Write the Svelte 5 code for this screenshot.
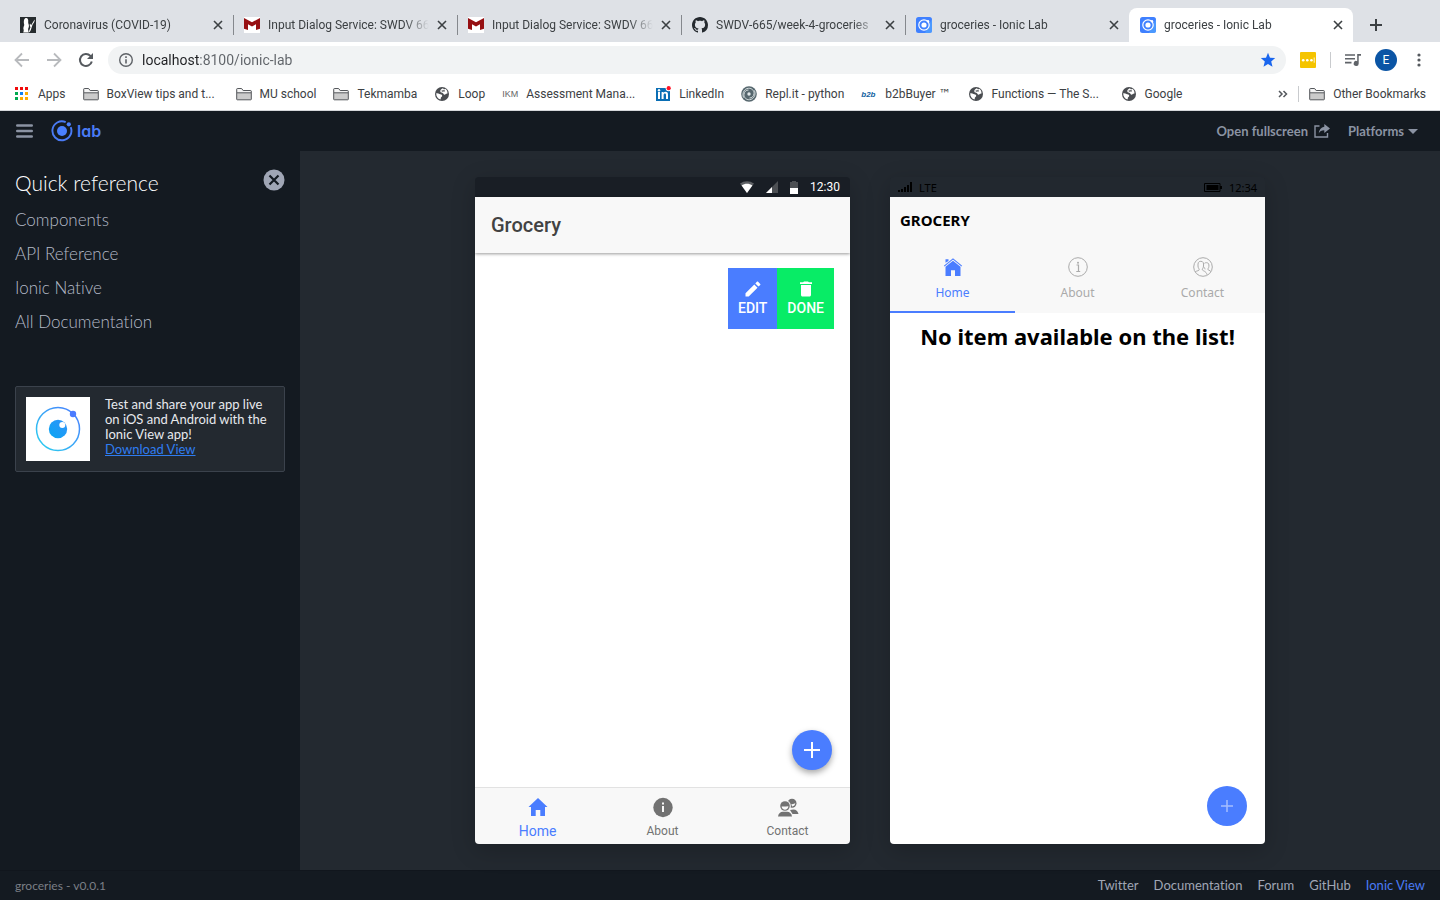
<script>
  const tabs = [
    { icon: 'rabbit', title: 'Coronavirus (COVID-19)' },
    { icon: 'mcafee', title: 'Input Dialog Service: SWDV 66' },
    { icon: 'mcafee', title: 'Input Dialog Service: SWDV 66' },
    { icon: 'github', title: 'SWDV-665/week-4-groceries' },
    { icon: 'ionic', title: 'groceries - Ionic Lab' },
    { icon: 'ionic', title: 'groceries - Ionic Lab', active: true }
  ];

  const bookmarks = [
    { icon: 'apps', label: 'Apps' },
    { icon: 'folder', label: 'BoxView tips and t...', long: true },
    { icon: 'folder', label: 'MU school' },
    { icon: 'folder', label: 'Tekmamba' },
    { icon: 'globe', label: 'Loop' },
    { icon: 'ikm', label: 'Assessment Mana...', long: true },
    { icon: 'linkedin', label: 'LinkedIn' },
    { icon: 'replit', label: 'Repl.it - python' },
    { icon: 'b2b', label: 'b2bBuyer', trademark: true },
    { icon: 'globe', label: 'Functions — The S...', long: true },
    { icon: 'globe', label: 'Google' }
  ];

  const reference = ['Components', 'API Reference', 'Ionic Native', 'All Documentation'];
  const footerLinks = ['Twitter', 'Documentation', 'Forum', 'GitHub'];
  const appTabs = ['Home', 'About', 'Contact'];

  let url = $state('localhost:8100/ionic-lab');
</script>

{#snippet icon(name)}
  <svg class="icon" viewBox="0 0 16 16" aria-hidden="true">
    {#if name === 'rabbit'}
      <rect width="16" height="16" fill="#262b2e" />
      <path d="M5.600 1C7.600.4 8.600 2.600 8.200 5c-.2 1.200.6 2 .7 3.600.1 2-.6 2.400-.8 3.600L8.600 15.500H3.200c.6-1.200.6-1.700.4-2.900C2.900 11 3.900 9.200 4.300 7.900 3.500 5.200 3.700 1.700 5.600 1z" fill="#fff" />
      <path d="M14.600 2.500c.5 1.700-.8 3.500-2 5l-1.800 5.500c-.5 1.400-1.500 2.300-2.300 2.400l2-5.200C9.400 8.500 9.700 6.500 10.300 6.700l.8 1.500z" fill="#fff" />
    {:else if name === 'mcafee'}
      <rect width="16" height="16" fill="#fff" />
      <path d="M0 1l8 4.200L16 1v10.800l-4 1.200V7.200L8 9.400 4 7.200V13l-4-1.200z" fill="#960f12" />
    {:else if name === 'github'}
      <path fill="#24292e" d="M8 0C3.58 0 0 3.58 0 8c0 3.54 2.29 6.53 5.47 7.59.4.07.55-.17.55-.38 0-.19-.01-.82-.01-1.49-2.01.37-2.53-.49-2.69-.94-.09-.23-.48-.94-.82-1.13-.28-.15-.68-.52-.01-.53.63-.01 1.08.58 1.23.82.72 1.21 1.87.87 2.33.66.07-.52.28-.87.51-1.07-1.78-.2-3.64-.89-3.64-3.95 0-.87.31-1.59.82-2.15-.08-.2-.36-1.02.08-2.12 0 0 .67-.21 2.2.82.64-.18 1.32-.27 2-.27.68 0 1.36.09 2 .27 1.53-1.04 2.2-.82 2.2-.82.44 1.1.16 1.92.08 2.12.51.56.82 1.27.82 2.15 0 3.07-1.87 3.75-3.65 3.95.29.25.54.73.54 1.48 0 1.07-.01 1.93-.01 2.2 0 .21.15.46.55.38A8.013 8.013 0 0016 8c0-4.42-3.58-8-8-8z" />
    {:else if name === 'ionic'}
      <rect width="16" height="16" rx="2.500" fill="#3f80ff" />
      <path d="M16 2v11.500a2.500 2.500 0 0 1-2.500 2.500H9z" fill="#51a4ff" opacity=".7" />
      <circle cx="8" cy="8" r="5.200" fill="none" stroke="#fff" stroke-width="1.200" />
      <circle cx="8" cy="8" r="2.600" fill="#fff" />
      <circle cx="12" cy="4.300" r="1.200" fill="#fff" />
    {:else if name === 'apps'}
      <g transform="translate(0 1)">
        <path d="M1 0h3v3H1zM6 0h3v3H6zM11 0h3v3h-3z" fill="#f00b0b" />
        <path d="M1 5h3v3H1zM1 10h3v3H1z" fill="#00a94f" />
        <path d="M6 5h3v3H6z" fill="#0f80f5" />
        <path d="M11 5h3v3h-3zM6 10h3v3H6zM11 10h3v3h-3z" fill="#ffab00" />
      </g>
    {:else if name === 'folder'}
      <path d="M.7 13.300V3.200c0-.4.3-.7.700-.7h4.200l1.600 2h7.400c.4 0 .7.300.7.700v8.100c0 .3-.2.500-.5.500H1.200c-.3 0-.5-.2-.5-.5z" fill="#cbcbcb" />
      <path d="M1.200 3h4.200L7 5h7.700v1.700H1.200z" fill="#f4f4f4" />
      <path d="M.7 13.300V3.200c0-.4.3-.7.700-.7h4.200l1.600 2h7.400c.4 0 .7.300.7.700v8.100c0 .3-.2.500-.5.500H1.200c-.3 0-.5-.2-.5-.5zM1 6.800h14" fill="none" stroke="#55585c" />
    {:else if name === 'globe'}
      <circle cx="8" cy="8" r="7" fill="#4a4d51" />
      <path d="M9 2.200C7.600 2.600 5.900 4 6.300 5.600c.3 1.300 1.900 1.100 2.700 1.600.7.500.6 1.500 1.600 1.500 1.100 0 1.200-1.200 2.900-1.100.2-2.400-.9-4-2.300-4.800-.6.800-1.300.9-2.200-.6z" fill="#fff" />
      <path d="M2.200 7.300c1.300-.4 2.400.2 3.300.7 1.100.5 2.400.3 2.700 1.400.3 1.200-1.100 1.300-1.300 2.200-.1.700 0 1.300-.4 2C3.800 12.900 2.100 10.500 2.200 7.300z" fill="#fff" />
      <path d="M7.700 5.300c1.200-.9 1.800 0 3-.7" fill="none" stroke="#4a4d51" stroke-width="1.300" />
    {:else if name === 'linkedin'}
      <path d="M1 2h14v13H1z" fill="#0a6eb4" />
      <rect x="3" y="6" width="2" height="7" fill="#fff" />
      <circle cx="4" cy="4.200" r="1.200" fill="#fff" />
      <path d="M6.600 6h1.900v1c.5-.8 1.200-1.200 2.200-1.200 1.700 0 2.300 1.100 2.300 2.900V13h-2V9c0-.9-.3-1.500-1.100-1.500-.9 0-1.300.7-1.300 1.600V13h-2z" fill="#fff" />
      <circle cx="13.700" cy="2.200" r="3" fill="#fff" />
      <circle cx="13.700" cy="2.200" r="2.100" fill="#ff1226" />
    {:else if name === 'replit'}
      <circle cx="8" cy="8" r="7.800" fill="#56676e" />
      <g fill="none" stroke="#dfe6e8" stroke-width=".9">
        <path d="M2.500 11.500C.8 7 3.300 2.600 7.500 2.300c3.500-.2 5.800 2.400 5.500 5.400-.2 2.700-2.200 4.300-4.500 4.300" />
        <path d="M13.500 4.500c1.700 4.500-.8 8.900-5 9.200-3.500.2-5.800-2.400-5.500-5.400.2-2.700 2.200-4.300 4.500-4.300" />
      </g>
      <circle cx="8" cy="8" r="1.700" fill="#dfe6e8" />
    {/if}
  </svg>
{/snippet}

{#snippet closeX()}
  <svg width="10" height="10" viewBox="0 0 10 10" aria-hidden="true"><path d="M1 1l8 8M9 1l-8 8" stroke="#3c4043" stroke-width="1.600" fill="none" /></svg>
{/snippet}

<div class="window">
  <header class="browser">
    <div class="tabstrip">
      {#each tabs as tab}
        <div class="tab" class:active={tab.active}>
          {@render icon(tab.icon)}
          <span class="title">{tab.title}</span>
          <button class="bare" aria-label="Close tab">{@render closeX()}</button>
        </div>
      {/each}
      <button class="bare newtab" aria-label="New tab">
        <svg width="12" height="12" viewBox="0 0 12 12"><path d="M6 0v12M0 6h12" stroke="#3c4043" stroke-width="2" /></svg>
      </button>
    </div>

    <div class="toolbar">
      <div class="history">
        <button class="bare" aria-label="Back">
          <svg width="16" height="16" viewBox="0 0 16 16"><path d="M15 8H2M8 1.500L1.500 8 8 14.500" fill="none" stroke="#b8babd" stroke-width="1.800" /></svg>
        </button>
        <button class="bare" aria-label="Forward">
          <svg width="16" height="16" viewBox="0 0 16 16"><path d="M1 8h13M8 1.500L14.500 8 8 14.500" fill="none" stroke="#b8babd" stroke-width="1.800" /></svg>
        </button>
        <button class="bare" aria-label="Reload">
          <svg width="16" height="16" viewBox="0 0 16 16"><path d="M13.800 9.500A6 6 0 1 1 12.400 3.900L14 5.500" fill="none" stroke="#55595e" stroke-width="2" /><path d="M15 1v6H9z" fill="#55595e" /></svg>
        </button>
      </div>
      <div class="omnibox">
        <svg width="16" height="16" viewBox="0 0 16 16" aria-hidden="true"><circle cx="8" cy="8" r="6.300" fill="none" stroke="#5f6368" stroke-width="1.400" /><path d="M8 7.200v4.300M8 4.300v1.600" stroke="#5f6368" stroke-width="1.600" /></svg>
        <input aria-label="Address" bind:value={url} />
        <svg width="16" height="16" viewBox="0 0 16 16" aria-hidden="true"><path d="M8 .8l2 4.900 5.200.4-4 3.400 1.300 5.200L8 11.900l-4.500 2.800 1.300-5.200-4-3.400L6 5.700z" fill="#1a66ee" /></svg>
      </div>
      <div class="extensions">
        <svg width="16" height="16" viewBox="0 0 16 16" aria-hidden="true"><rect width="16" height="16" rx="1" fill="#f5c400" /><circle cx="3.200" cy="8.300" r="1.300" fill="#fff" /><circle cx="7.300" cy="8.300" r="1.300" fill="#fff" /><circle cx="11.400" cy="8.300" r="1.300" fill="#fff" /><path d="M14.200 5.500v5.200" stroke="#fff" stroke-width=".8" /></svg>
        <span class="rule"></span>
        <svg width="16" height="16" viewBox="0 0 16 16" aria-hidden="true"><path d="M0 3h10M0 6.800h10M0 10.600h6.500" stroke="#5f6368" stroke-width="1.600" /><path d="M16 2v1.800h-2.300v7.700a2.500 2.500 0 1 1-1.500-2.300V2z" fill="#5f6368" /></svg>
        <button class="avatar">E</button>
        <button class="bare" aria-label="Menu">
          <svg width="16" height="16" viewBox="0 0 16 16"><g fill="#55595e"><circle cx="8" cy="3" r="1.600" /><circle cx="8" cy="8" r="1.600" /><circle cx="8" cy="13" r="1.600" /></g></svg>
        </button>
      </div>
    </div>

    <nav class="bookmarks" aria-label="Bookmarks">
      {#each bookmarks as mark}
        <a class="mark" class:long={mark.long} href="#top">
          {#if mark.icon === 'ikm'}
            <span class="ikm">IKM</span>
          {:else if mark.icon === 'b2b'}
            <span class="b2b">b2b</span>
          {:else}
            {@render icon(mark.icon)}
          {/if}
          <span>{mark.label}{#if mark.trademark}{' '}<span class="tm">™</span>{/if}</span>
        </a>
      {/each}
      <div class="overflow">
        <button class="bare" aria-label="More bookmarks">
          <svg width="10" height="8" viewBox="0 0 10 8"><path d="M1 1l3 3-3 3M5.500 1l3 3-3 3" fill="none" stroke="#55595e" stroke-width="1.500" /></svg>
        </button>
        <span class="rule"></span>
        <a class="mark" href="#top">{@render icon('folder')}<span>Other Bookmarks</span></a>
      </div>
    </nav>
  </header>

  <div class="labbar">
    <button class="bare" aria-label="Toggle menu">
      <svg width="17" height="14" viewBox="0 0 17 14"><path d="M1.200 1.500h14.600M1.200 7h14.600M1.200 12.500h14.600" stroke="#8b93a3" stroke-width="2.400" stroke-linecap="round" /></svg>
    </button>
    <a class="logo" href="#top">
      <svg width="22" height="22" viewBox="0 0 22 22" aria-hidden="true">
        <path d="M14.700 2.100A9.500 9.500 0 1 0 19.700 7.200" fill="none" stroke="#4a7bf5" stroke-width="1.900" />
        <circle cx="11" cy="11" r="5" fill="#4a80ff" />
        <circle cx="17.800" cy="4.300" r="2.100" fill="#4a80ff" />
      </svg>
      <span>lab</span>
    </a>
    <div class="actions">
      <a href="#top">Open fullscreen
        <svg width="16" height="14" viewBox="0 0 16 14" aria-hidden="true"><path d="M5.500 2H1v11h12.500V9" fill="none" stroke="#8b93a3" stroke-width="1.400" /><path d="M10.300 0L16 4.500 10.300 9V6.300C7.500 6.300 5.800 7.300 4.700 9.500 5 5.800 7 3.300 10.300 2.800z" fill="#8b93a3" /></svg>
      </a>
      <button class="bare platforms">Platforms
        <svg width="10" height="5" viewBox="0 0 10 5" aria-hidden="true"><path d="M0 0h10L5 5z" fill="#8b93a3" /></svg>
      </button>
    </div>
  </div>

  <div class="body">
    <aside>
      <div class="heading">
        <h2>Quick reference</h2>
        <button class="bare" aria-label="Close quick reference">
          <svg width="22" height="22" viewBox="0 0 22 22"><circle cx="11" cy="11" r="10.500" fill="#a0a6b5" /><path d="M6.500 6.500l9 9M15.500 6.500l-9 9" stroke="#141a21" stroke-width="2.200" /></svg>
        </button>
      </div>
      <ul>
        {#each reference as item}
          <li><a href="#top">{item}</a></li>
        {/each}
      </ul>
      <section class="promo">
        <svg width="64" height="64" viewBox="0 0 64 64" aria-hidden="true">
          <defs>
            <linearGradient id="ring" x1="1" y1="0" x2="0" y2="1"><stop offset="0" stop-color="#4a7bff" /><stop offset="1" stop-color="#2ad3ee" /></linearGradient>
            <linearGradient id="eye" x1="1" y1="0" x2="0" y2="1"><stop offset="0" stop-color="#2f93fa" /><stop offset="1" stop-color="#0aa5f2" /></linearGradient>
          </defs>
          <rect width="64" height="64" fill="#fff" />
          <circle cx="32" cy="32" r="21.500" fill="none" stroke="url(#ring)" stroke-width="1.500" />
          <circle cx="47" cy="17" r="3.200" fill="#4a7bff" />
          <circle cx="32" cy="32" r="9.200" fill="url(#eye)" />
          <circle cx="36.300" cy="28" r="3" fill="#fff" />
        </svg>
        <p>Test and share your app live on iOS and Android with the Ionic View app!<br /><a href="#top">Download View</a></p>
      </section>
    </aside>

    <main>
      <article class="phone md">
        <div class="status">
          <svg width="14" height="12" viewBox="0 0 14 12" aria-hidden="true"><path d="M0 2.600C4-.7 10-.7 14 2.600L7 12z" fill="#5d6064" /><path d="M1.600 4.400c3.200-2.300 7.600-2.300 10.800 0L7 12z" fill="#fff" /></svg>
          <svg width="12" height="12" viewBox="0 0 12 12" aria-hidden="true"><path d="M0 12L12 0v12z" fill="#4d5054" /><path d="M0 12l6-6v6z" fill="#fff" /></svg>
          <svg width="8" height="13" viewBox="0 0 8 13" aria-hidden="true"><path d="M0 1h2V0h4v1h2v6H0z" fill="#4d5054" /><path d="M0 7h8v6H0z" fill="#fff" /></svg>
          <span>12:30</span>
        </div>
        <header><h1>Grocery</h1></header>
        <div class="content">
          <div class="options">
            <button class="edit">
              <svg width="16" height="16" viewBox="0 0 16 16" aria-hidden="true"><path d="M.5 12.300v3.200h3.200l8.800-8.800-3.200-3.200zM15.200 4.100c.4-.4.4-.9 0-1.200L13.100.8c-.4-.4-.9-.4-1.200 0l-1.600 1.600 3.200 3.200z" fill="#fff" /></svg>
              EDIT
            </button>
            <button class="done">
              <svg width="16" height="16" viewBox="0 0 16 16" aria-hidden="true"><path d="M3 4h10v10c0 .9-.7 1.500-1.500 1.500h-7C3.700 15.500 3 14.900 3 14zM14 1.300V3H2V1.300h3.100L6 .5h4l.9.8z" fill="#fff" /></svg>
              DONE
            </button>
          </div>
          <button class="fab" aria-label="Add item"><svg width="16" height="16" viewBox="0 0 16 16"><path d="M8 0v16M0 8h16" stroke="#fff" stroke-width="2" /></svg></button>
        </div>
        <nav>
          {#each appTabs as name, i}
            <a href="#top" class:on={i === 0}>
              <svg width="24" height="24" viewBox="0 0 24 24" aria-hidden="true">
                {#if name === 'Home'}
                  <path d="M9.700 21v-6h4.600v6h4.700v-9h2.500L12 3l-9.500 9H5v9z" fill="currentColor" />
                {:else if name === 'About'}
                  <circle cx="12" cy="12.500" r="9.700" fill="currentColor" /><path d="M11 11h2v6h-2zM11 7.500h2v2h-2z" fill="#f8f8f8" />
                {:else}
                  <g fill="currentColor"><circle cx="16" cy="8.300" r="4.500" /><path d="M14 15c5-1.500 7.500 0 8.500 4h-6z" /></g>
                  <circle cx="9" cy="11" r="5.900" fill="#f8f8f8" />
                  <g fill="currentColor"><circle cx="9" cy="11" r="4.800" /><path d="M2 21.500c.5-3.300 2.500-4.500 4.800-4.700h4.400c2.300.2 4.300 1.400 4.800 4.700z" /></g>
                  <path d="M5.600 11.500c2.400.2 4.400-.2 6.800-.200-.2 4.400-6.400 4.500-6.800.200zM15.200 9.200c2.200.1 3-.200 4.100-1.100-.2 2-1.200 3.200-3.100 3.400z" fill="#f8f8f8" />
                {/if}
              </svg>
              <span>{name}</span>
            </a>
          {/each}
        </nav>
      </article>

      <article class="phone wp">
        <div class="status">
          <svg width="14" height="10" viewBox="0 0 14 10" aria-hidden="true"><path d="M0 8h2v2H0zM3 7h2v3H3zM6 5h2v5H6zM9 3h2v7H9zM12 0h2v10h-2z" /></svg>
          <span>LTE</span>
          <svg class="battery" width="18" height="9" viewBox="0 0 18 9" aria-hidden="true"><path d="M.5.500h15.500v8H.5z" fill="none" stroke="#000" /><path d="M2.500 2h12v5h-12zM16 3h2v3h-2z" /></svg>
          <span>12:34</span>
        </div>
        <header><h1>GROCERY</h1></header>
        <nav>
          {#each appTabs as name, i}
            <a href="#top" class:on={i === 0}>
              <svg width="20" height="20" viewBox="0 0 20 20" aria-hidden="true">
                {#if name === 'Home'}
                  <path d="M2.500 19V9.700l7.500-6 7.500 6V19H12v-5.700H8V19zM2.500 5.800V2.300h3v1.600z" fill="currentColor" /><path d="M1.200 9.100L10 1.900l8.800 7.200" fill="none" stroke="currentColor" stroke-width="1.100" />
                {:else if name === 'About'}
                  <circle cx="10" cy="10" r="9.300" fill="none" stroke="currentColor" /><path d="M8.500 8h2v6.500M8.300 14.500h3.900" fill="none" stroke="currentColor" stroke-width="1.200" /><circle cx="10" cy="5.700" r="1" fill="currentColor" />
                {:else}
                  <g fill="none" stroke="currentColor"><circle cx="10" cy="10" r="9.300" /><path d="M2.200 14.800c1.800-1.200 4-.9 4-2.200 0-1-1.200-1.500-1.200-3.600C4.800 6 5.300 4.300 7.800 4.300s3 1.700 2.700 4.700c0 2-1.200 2.600-1.200 3.600 0 1.400 4 1.200 4.700 5.200M11.500 6.300c.6-.5 1.300-.7 2.100-.6 2 0 2.500 1.600 2.300 3.700 0 1.500-1 2-1 2.900 0 .9 1.900.9 3 2.200M11.200 10.300c.2 1 .9 1.300.9 2" /></g>
                {/if}
              </svg>
              <span>{name}</span>
            </a>
          {/each}
        </nav>
        <div class="content">
          <h2>No item available on the list!</h2>
          <button class="fab" aria-label="Add item"><svg width="12" height="12" viewBox="0 0 12 12"><path d="M6 0v12M0 6h12" stroke="#a5beff" stroke-width="1.500" /></svg></button>
        </div>
      </article>
    </main>
  </div>

  <footer>
    <span>groceries - v0.0.1</span>
    <nav aria-label="Links">
      {#each footerLinks as link}<a href="#top">{link}</a>{/each}
      <a class="view" href="#top">Ionic View</a>
    </nav>
  </footer>
</div>

<style>
  :global(body) { margin: 0; }
  * { box-sizing: border-box; }
  a { color: inherit; text-decoration: none; }
  h1, h2, p, ul { margin: 0; padding: 0; }
  ul { list-style: none; }
  svg { display: block; flex: none; }
  button { font: inherit; color: inherit; border: 0; padding: 0; cursor: pointer; }
  .bare { background: none; display: flex; align-items: center; flex: none; }
  .icon { width: 16px; height: 16px; }
  .rule { width: 1px; height: 16px; background: #c9cbce; flex: none; }

  .window { min-height: 100vh; display: flex; flex-direction: column; background: #141a21; font-family: Lato, sans-serif; font-variant-ligatures: none; }

  .browser { background: #fff; border-bottom: 1px solid #d5d7da; font-family: Roboto, sans-serif; font-size: 12px; color: #3c4043; }
  .tabstrip { display: flex; height: 42px; padding: 8px 0 0 9px; background: #dee1e6; }
  .tab { flex: 0 1 224px; min-width: 0; display: flex; align-items: center; gap: 8px; padding: 0 10px 0 11px; position: relative; }
  .tab + .tab::before { content: ''; position: absolute; left: 0; top: 7px; width: 1px; height: 20px; background: #85888d; }
  .tab .title { flex: 1; min-width: 0; overflow: hidden; white-space: nowrap; mask-image: linear-gradient(to right, #000 calc(100% - 24px), transparent); }
  .tab.active { background: #fff; border-radius: 8px 8px 0 0; }
  .tab.active::before { display: none; }
  .newtab { padding: 0 17px; }

  .toolbar { display: flex; align-items: center; gap: 14px; height: 36px; padding: 0 13px 0 14px; }
  .history { display: flex; gap: 16px; }
  .omnibox { flex: 1; display: flex; align-items: center; gap: 8px; height: 28px; padding: 0 10px; border-radius: 14px; background: #f1f3f4; }
  .omnibox input { flex: 1; min-width: 0; border: 0; padding: 0; outline: 0; font: 14px Roboto, sans-serif; color: transparent; background: linear-gradient(to right, #202124 57px, #5f6368 57px); -webkit-background-clip: text; background-clip: text; }
  .extensions { display: flex; align-items: center; gap: 14px; }
  .avatar { width: 22px; height: 22px; border-radius: 50%; background: #0b55a5; color: #fff; }

  .bookmarks { display: flex; align-items: center; gap: 17px; height: 32px; padding: 0 14px; white-space: nowrap; }
  .mark { display: flex; align-items: center; gap: 8px; }
  .long { min-width: 136px; }
  .overflow { display: flex; align-items: center; gap: 10px; margin-left: auto; }
  .ikm { width: 16px; font: 9px "Liberation Sans", sans-serif; color: #666; }
  .b2b { width: 16px; font: italic 700 8px "Liberation Sans", sans-serif; color: #12639f; }
  .tm { font-family: "DejaVu Sans", sans-serif; line-height: 1; }

  .labbar { display: flex; align-items: center; height: 40px; padding: 0 22px 0 16px; color: #8b93a3; }
  .logo { display: flex; align-items: center; gap: 4px; margin-left: 18px; color: #4a7bf5; font: 600 16px Inter, sans-serif; font-feature-settings: "cv11"; }
  .actions { display: flex; align-items: center; gap: 18px; margin-left: auto; font-size: 13px; font-weight: 700; }
  .actions a { display: flex; align-items: center; gap: 6px; }
  .platforms { gap: 4px; }

  .body { flex: 1; display: flex; }
  aside { width: 300px; flex: none; padding: 16px 15px; color: #b4bac8; }
  .heading { display: flex; justify-content: space-between; align-items: flex-start; }
  .heading h2 { font-size: 21px; font-weight: 300; line-height: 32px; color: #fff; }
  .heading .bare { height: 26px; }
  ul { margin-top: 4px; font-size: 17px; font-weight: 300; line-height: 34px; }
  .promo { display: flex; gap: 15px; margin-top: 47px; padding: 10px; border: 1px solid #3b424c; border-radius: 2px; background: #232930; color: #e8eaee; font-size: 13px; line-height: 15px; }
  .promo a { color: #2f7df0; text-decoration: underline; }

  main { flex: 1; display: flex; justify-content: center; align-items: center; gap: 40px; padding: 26px; background: #232930; }
  .phone { width: 375px; height: 667px; flex: none; display: flex; flex-direction: column; border-radius: 4px; overflow: hidden; background: #22282f; box-shadow: 0 6px 24px rgba(0, 0, 0, .2); }
  .status { display: flex; align-items: center; height: 20px; flex: none; }
  .content { flex: 1; position: relative; background: #fff; }
  .fab { position: absolute; right: 18px; bottom: 18px; width: 40px; height: 40px; border-radius: 50%; background: #4a7dff; display: grid; place-items: center; }

  .md { font-family: Roboto, sans-serif; }
  .md .status { justify-content: flex-end; gap: 12px; padding-right: 10px; background: #191e25; color: #fff; font-size: 12px; }
  .md header { display: flex; align-items: center; height: 56px; padding: 0 16px; background: #f8f8f8; box-shadow: 0 1px 3px rgba(0, 0, 0, .4); z-index: 1; }
  .md h1 { font-size: 20px; font-weight: 500; color: #424242; }
  .options { display: flex; justify-content: flex-end; padding: 15px 16px; }
  .options button { display: flex; flex-direction: column; align-items: center; justify-content: center; gap: 3px; height: 61px; padding: 0 10px; color: #fff; font-size: 14px; line-height: 16px; font-weight: 500; }
  .edit { background: #4a7dff; }
  .done { background: #08ec66; }
  .md .fab { bottom: 17px; box-shadow: 0 3px 6px rgba(0, 0, 0, .35); }
  .md nav { display: flex; height: 57px; border-top: 1px solid #e2e2e2; background: #f8f8f8; color: #727272; font-size: 12px; }
  .md nav a { flex: 1; display: flex; flex-direction: column; align-items: center; gap: 3px; padding-top: 7px; line-height: 18px; }
  .md nav .on { color: #4a7dff; font-size: 14px; }

  .wp { font-family: "Noto Sans", sans-serif; }
  .wp .status { gap: 7px; padding: 0 8px; background: #22282f; color: #000; font-size: 11px; }
  .wp .battery { margin-left: auto; }
  .wp header { display: flex; align-items: center; height: 47px; padding: 0 10px 2px; background: #f8f8f8; }
  .wp h1 { font-size: 15px; font-weight: 700; }
  .wp nav { display: flex; height: 69px; background: #f8f8f8; color: #aaa; font-size: 12px; }
  .wp nav a { flex: 1; display: flex; flex-direction: column; align-items: center; gap: 7px; padding-top: 13px; line-height: 18px; border-bottom: 2px solid transparent; }
  .wp nav .on { color: #4a7dff; border-color: #4a7dff; }
  .wp h2 { padding-top: 7px; text-align: center; font-size: 22px; line-height: 32px; font-weight: 700; }

  footer { display: flex; align-items: center; justify-content: space-between; height: 30px; padding: 0 15px 1px; border-top: 1px solid #11161d; color: #7b7f86; font-size: 12px; }
  footer nav { display: flex; gap: 15px; font-size: 13px; color: #a0a6b5; }
  footer .view { color: #4a7bf5; }
</style>
